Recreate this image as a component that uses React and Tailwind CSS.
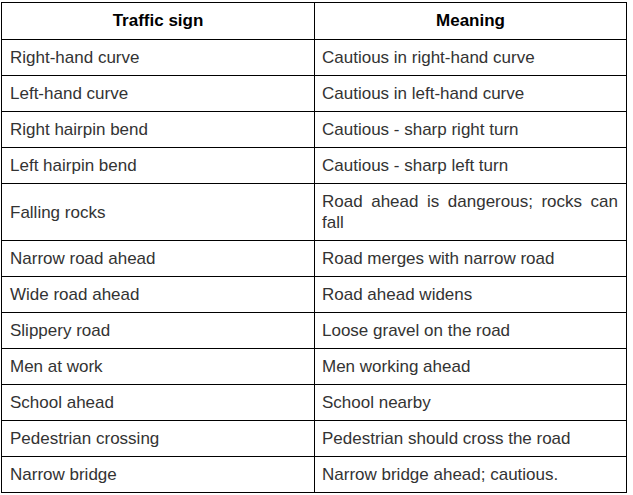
import React from "react";

const rows = [
  ["Right-hand curve", "Cautious in right-hand curve"],
  ["Left-hand curve", "Cautious in left-hand curve"],
  ["Right hairpin bend", "Cautious - sharp right turn"],
  ["Left hairpin bend", "Cautious - sharp left turn"],
  ["Falling rocks", "Road ahead is dangerous; rocks can fall"],
  ["Narrow road ahead", "Road merges with narrow road"],
  ["Wide road ahead", "Road ahead widens"],
  ["Slippery road", "Loose gravel on the road"],
  ["Men at work", "Men working ahead"],
  ["School ahead", "School nearby"],
  ["Pedestrian crossing", "Pedestrian should cross the road"],
  ["Narrow bridge", "Narrow bridge ahead; cautious."],
];

function App() {
  return (
    <div className="bg-white w-[633px] h-[495px] pt-[2px] pl-[1px] font-['Liberation_Sans',Arial,sans-serif]">
      <table className="border-collapse w-[626px] table-fixed text-[17px] text-[#333]">
        <thead>
          <tr>
            <th className="w-[313px] border border-black px-2 py-[7px] leading-[22px] font-bold text-black text-center">
              Traffic sign
            </th>
            <th className="border border-black px-2 py-[7px] leading-[22px] font-bold text-black text-center">
              Meaning
            </th>
          </tr>
        </thead>
        <tbody>
          {rows.map(([sign, meaning]) => (
            <tr key={sign}>
              <td className="border border-black px-2 py-[7px] leading-[21px] align-middle">
                {sign}
              </td>
              <td className="border border-black pl-[7px] pr-2 py-[7px] leading-[21px] align-middle text-justify">
                {meaning}
              </td>
            </tr>
          ))}
        </tbody>
      </table>
    </div>
  );
}

export default App;
